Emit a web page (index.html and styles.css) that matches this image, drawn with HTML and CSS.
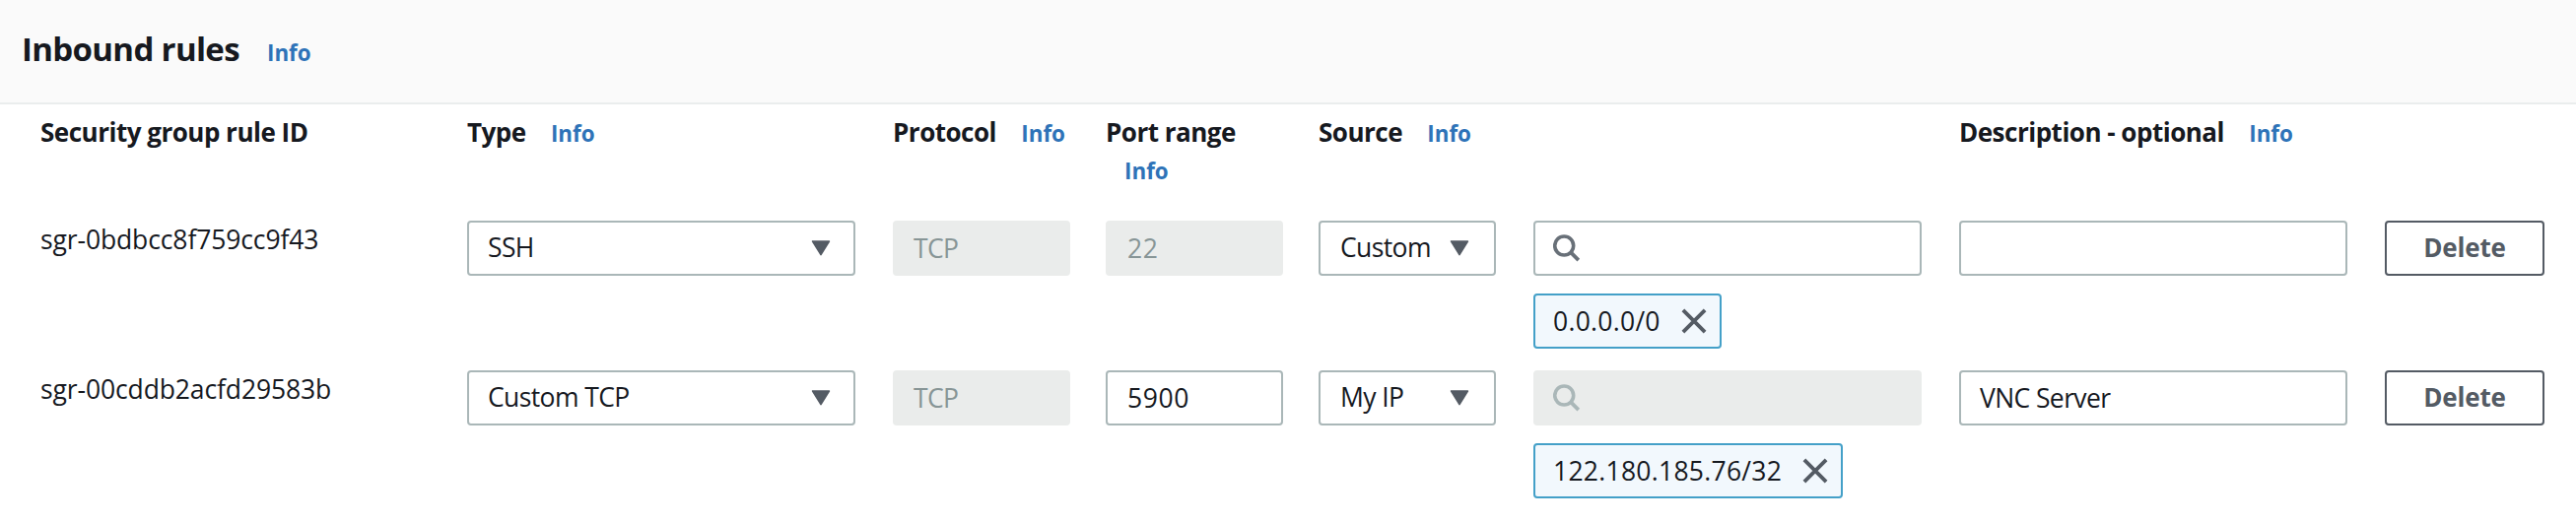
FILE: index.html
```
<!DOCTYPE html>
<html lang="en">
<head>
<meta charset="utf-8">
<title>Inbound rules</title>
<link rel="stylesheet" href="styles.css">
</head>
<body>
<svg class="sprite" aria-hidden="true">
  <symbol id="caret" viewBox="0 0 20 16"><path d="M1.6 1H18.4L10 14.6Z" fill="currentColor" stroke="currentColor" stroke-width="1.6" stroke-linejoin="round"/></symbol>
  <symbol id="search" viewBox="0 0 28 28"><circle cx="11.2" cy="11.5" r="9.5" fill="none" stroke="currentColor" stroke-width="3.6"/><path d="M17.8 18.2L25.8 26.2" stroke="currentColor" stroke-width="3.8"/></symbol>
  <symbol id="close" viewBox="0 0 26 26"><path d="M1.9 1.9L24.1 24.1M24.1 1.9L1.9 24.1" stroke="currentColor" stroke-width="3.8"/></symbol>
</svg>
<section class="panel">
  <header class="panel-header">
    <h2 class="title">Inbound rules</h2><a class="info">Info</a>
  </header>
  <div class="row head">
    <div class="label">Security group rule ID</div>
    <div class="label">Type <a class="info">Info</a></div>
    <div class="label">Protocol <a class="info">Info</a></div>
    <div class="label">Port range <a class="info">Info</a></div>
    <div class="label">Source <a class="info">Info</a></div>
    <div></div>
    <div class="label">Description - optional <a class="info">Info</a></div>
  </div>
  <div class="row">
    <div class="rule-id">sgr-0bdbcc8f759cc9f43</div>
    <div class="box select">SSH<svg class="caret"><use href="#caret"/></svg></div>
    <div class="box disabled">TCP</div>
    <div class="box disabled digits">22</div>
    <div class="box select narrow">Custom<svg class="caret"><use href="#caret"/></svg></div>
    <div class="source">
      <div class="box"><svg class="search"><use href="#search"/></svg></div>
      <div class="token">0.0.0.0/0<svg class="close"><use href="#close"/></svg></div>
    </div>
    <div class="box"></div>
    <button class="box delete">Delete</button>
  </div>
  <div class="row">
    <div class="rule-id">sgr-00cddb2acfd29583b</div>
    <div class="box select">Custom TCP<svg class="caret"><use href="#caret"/></svg></div>
    <div class="box disabled">TCP</div>
    <div class="box digits">5900</div>
    <div class="box select narrow">My IP<svg class="caret"><use href="#caret"/></svg></div>
    <div class="source">
      <div class="box disabled"><svg class="search"><use href="#search"/></svg></div>
      <div class="token">122.180.185.76/32<svg class="close"><use href="#close"/></svg></div>
    </div>
    <div class="box">VNC Server</div>
    <button class="box delete">Delete</button>
  </div>
</section>
</body>
</html>
```
FILE: styles.css
```
* { box-sizing: border-box; }
body {
  margin: 0;
  background: #fff;
  color: #16191f;
  font: 450 26.5px/38px "Open Sans", "Noto Sans", sans-serif;
}
.sprite { display: none; }
.panel-header {
  display: flex;
  align-items: baseline;
  height: 106px;
  padding: 28px 22px 0;
  background: #fafafa;
  border-bottom: 2px solid #eaeded;
}
.title {
  margin: 0;
  font-size: 33px;
  line-height: 44px;
  letter-spacing: -0.65px;
}
.info {
  display: inline-block;
  margin-left: 19px;
  color: #2e73b8;
  font-size: 22.4px;
  font-weight: 700;
  line-height: 30px;
  letter-spacing: 0;
}
.title + .info { margin-left: 28px; }
.row {
  display: grid;
  grid-template-columns: 397px 396px 180px 180px 182px 396px 396px 162px;
  column-gap: 36px;
  align-items: start;
  height: 132px;
  margin-bottom: 20px;
  padding-left: 41px;
}
.row > :nth-child(2),
.row > :nth-child(5),
.row > :nth-child(6),
.row > :nth-child(7) { margin-right: 2px; }
.row.head {
  height: 118px;
  margin: 0;
  padding-top: 9px;
}
.label {
  font-size: 26px;
  font-weight: 700;
  letter-spacing: -0.5px;
}
.rule-id {
  letter-spacing: -0.12px;
}
.box {
  display: flex;
  align-items: center;
  height: 56px;
  padding: 0 19px;
  border: 2px solid #aab7b8;
  border-radius: 4px;
  background: #fff;
  letter-spacing: -0.6px;
}
.digits {
  padding-left: 20px;
  letter-spacing: 0.6px;
}
.select {
  justify-content: space-between;
  padding: 0 23px 3px 19px;
}
.narrow { padding: 0 25px 3px 20px; }
.disabled {
  border-color: #eaeceb;
  background: #eaeceb;
  color: #879596;
}
.caret {
  width: 20px;
  height: 16px;
  margin-top: 2px;
  color: #545b64;
}
.source .box { padding-left: 18px; }
.search {
  width: 28px;
  height: 28px;
  margin-top: -1px;
  color: #687078;
}
.disabled .search { color: #aab7b8; }
.source {
  display: flex;
  flex-direction: column;
  gap: 18px;
}
.token {
  display: flex;
  align-items: center;
  align-self: flex-start;
  height: 56px;
  padding: 0 13px 0 18px;
  border: 2px solid #44a0c8;
  border-radius: 4px;
  background: #f2f8fd;
  letter-spacing: 0.27px;
}
.close {
  width: 26px;
  height: 26px;
  margin-left: 21px;
  color: #545b64;
}
.delete {
  justify-content: center;
  padding: 0 0 3px;
  border-color: #545b64;
  color: #545b64;
  font: 700 26px/38px "Open Sans", "Noto Sans", sans-serif;
  letter-spacing: -0.15px;
}
```
